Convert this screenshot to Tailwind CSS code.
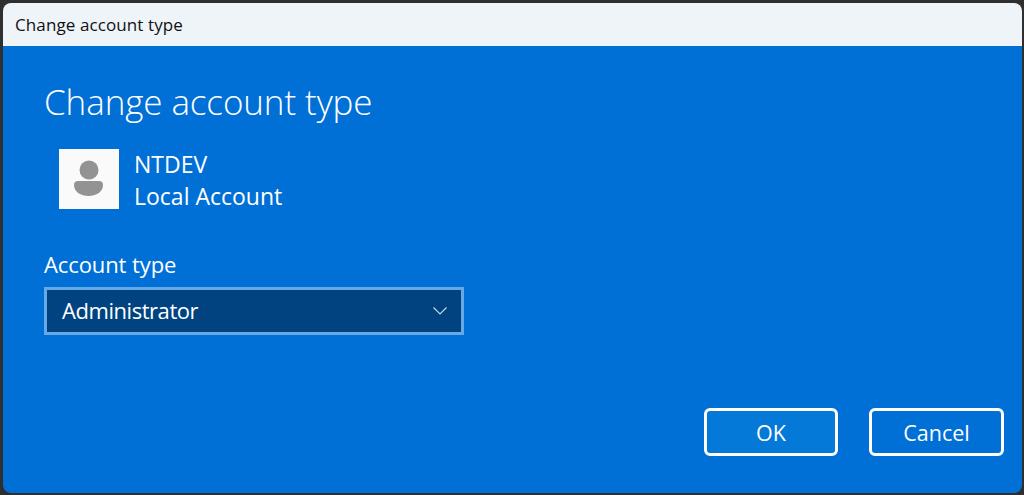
<!DOCTYPE html>
<html lang="en">
<head>
    <meta charset="UTF-8">
    <title>Change account type</title>
    <script src="https://cdn.jsdelivr.net/npm/@tailwindcss/browser@4"></script>
</head>
<body class="bg-[#2f2f2f] font-['Open_Sans',sans-serif]">
    <div class="w-[1024px] h-[495px] pl-[3px] pr-[2px] pt-[3px] pb-[2px] overflow-hidden">
        <div class="h-full flex flex-col rounded-[8px] overflow-hidden">
            <!-- Title bar -->
            <div class="h-[43px] shrink-0 bg-[#eff4f9] pl-[12px] flex items-center text-[17px] text-[#111] tracking-[0.1px]">Change account type</div>

            <!-- Dialog body -->
            <div class="flex-1 bg-[#0070d7] text-white pl-[41px] pr-[18px] flex flex-col">
                <h1 class="mt-[33px] h-[46px] flex items-center text-[35px] font-light tracking-[-0.1px]">Change account type</h1>

                <div class="mt-[24px] ml-[15px] flex gap-[15px]">
                    <div class="w-[60px] h-[60px] bg-[#fafafa] flex items-center justify-center">
                        <svg width="60" height="60" viewBox="0 0 60 60" class="blur-[0.6px]">
                            <circle cx="30" cy="21" r="9.5" fill="#939393"></circle>
                            <path d="M15 36 Q15 32 19 32 H40 Q44 32 44 36 C44 43 37 47 29.5 47 C22 47 15 43 15 36 Z" fill="#939393"></path>
                        </svg>
                    </div>
                    <div class="text-[23px] leading-[32px] -mt-[1px]">
                        <div>NTDEV</div>
                        <div>Local Account</div>
                    </div>
                </div>

                <div class="mt-[38px] text-[22px] leading-[28px] tracking-[-0.1px]">Account type</div>
                <div class="mt-[9px] w-[420px] h-[48px] border-[3px] border-[#66a9e7] bg-[#004380] pl-[15px] pr-[14px] flex items-center justify-between text-[22px] tracking-[-0.45px]">
                    <span class="-mt-[2px]">Administrator</span>
                    <svg width="14" height="8" viewBox="0 0 14 8" fill="none" stroke="#c3d6e8" stroke-width="1.2">
                        <path d="M0.5 0.5 L7 7 L13.5 0.5"></path>
                    </svg>
                </div>

                <div class="mt-auto mb-[37px] flex justify-end gap-[31px]">
                    <button class="w-[134px] h-[48px] pt-[2px] rounded-[6px] border-[3px] border-white bg-[#0479d8] text-[21.5px]">OK</button>
                    <button class="w-[135px] h-[48px] pt-[2px] rounded-[6px] border-[3px] border-white bg-[#0070d7] text-[21.5px]">Cancel</button>
                </div>
            </div>
        </div>
    </div>
</body>
</html>
